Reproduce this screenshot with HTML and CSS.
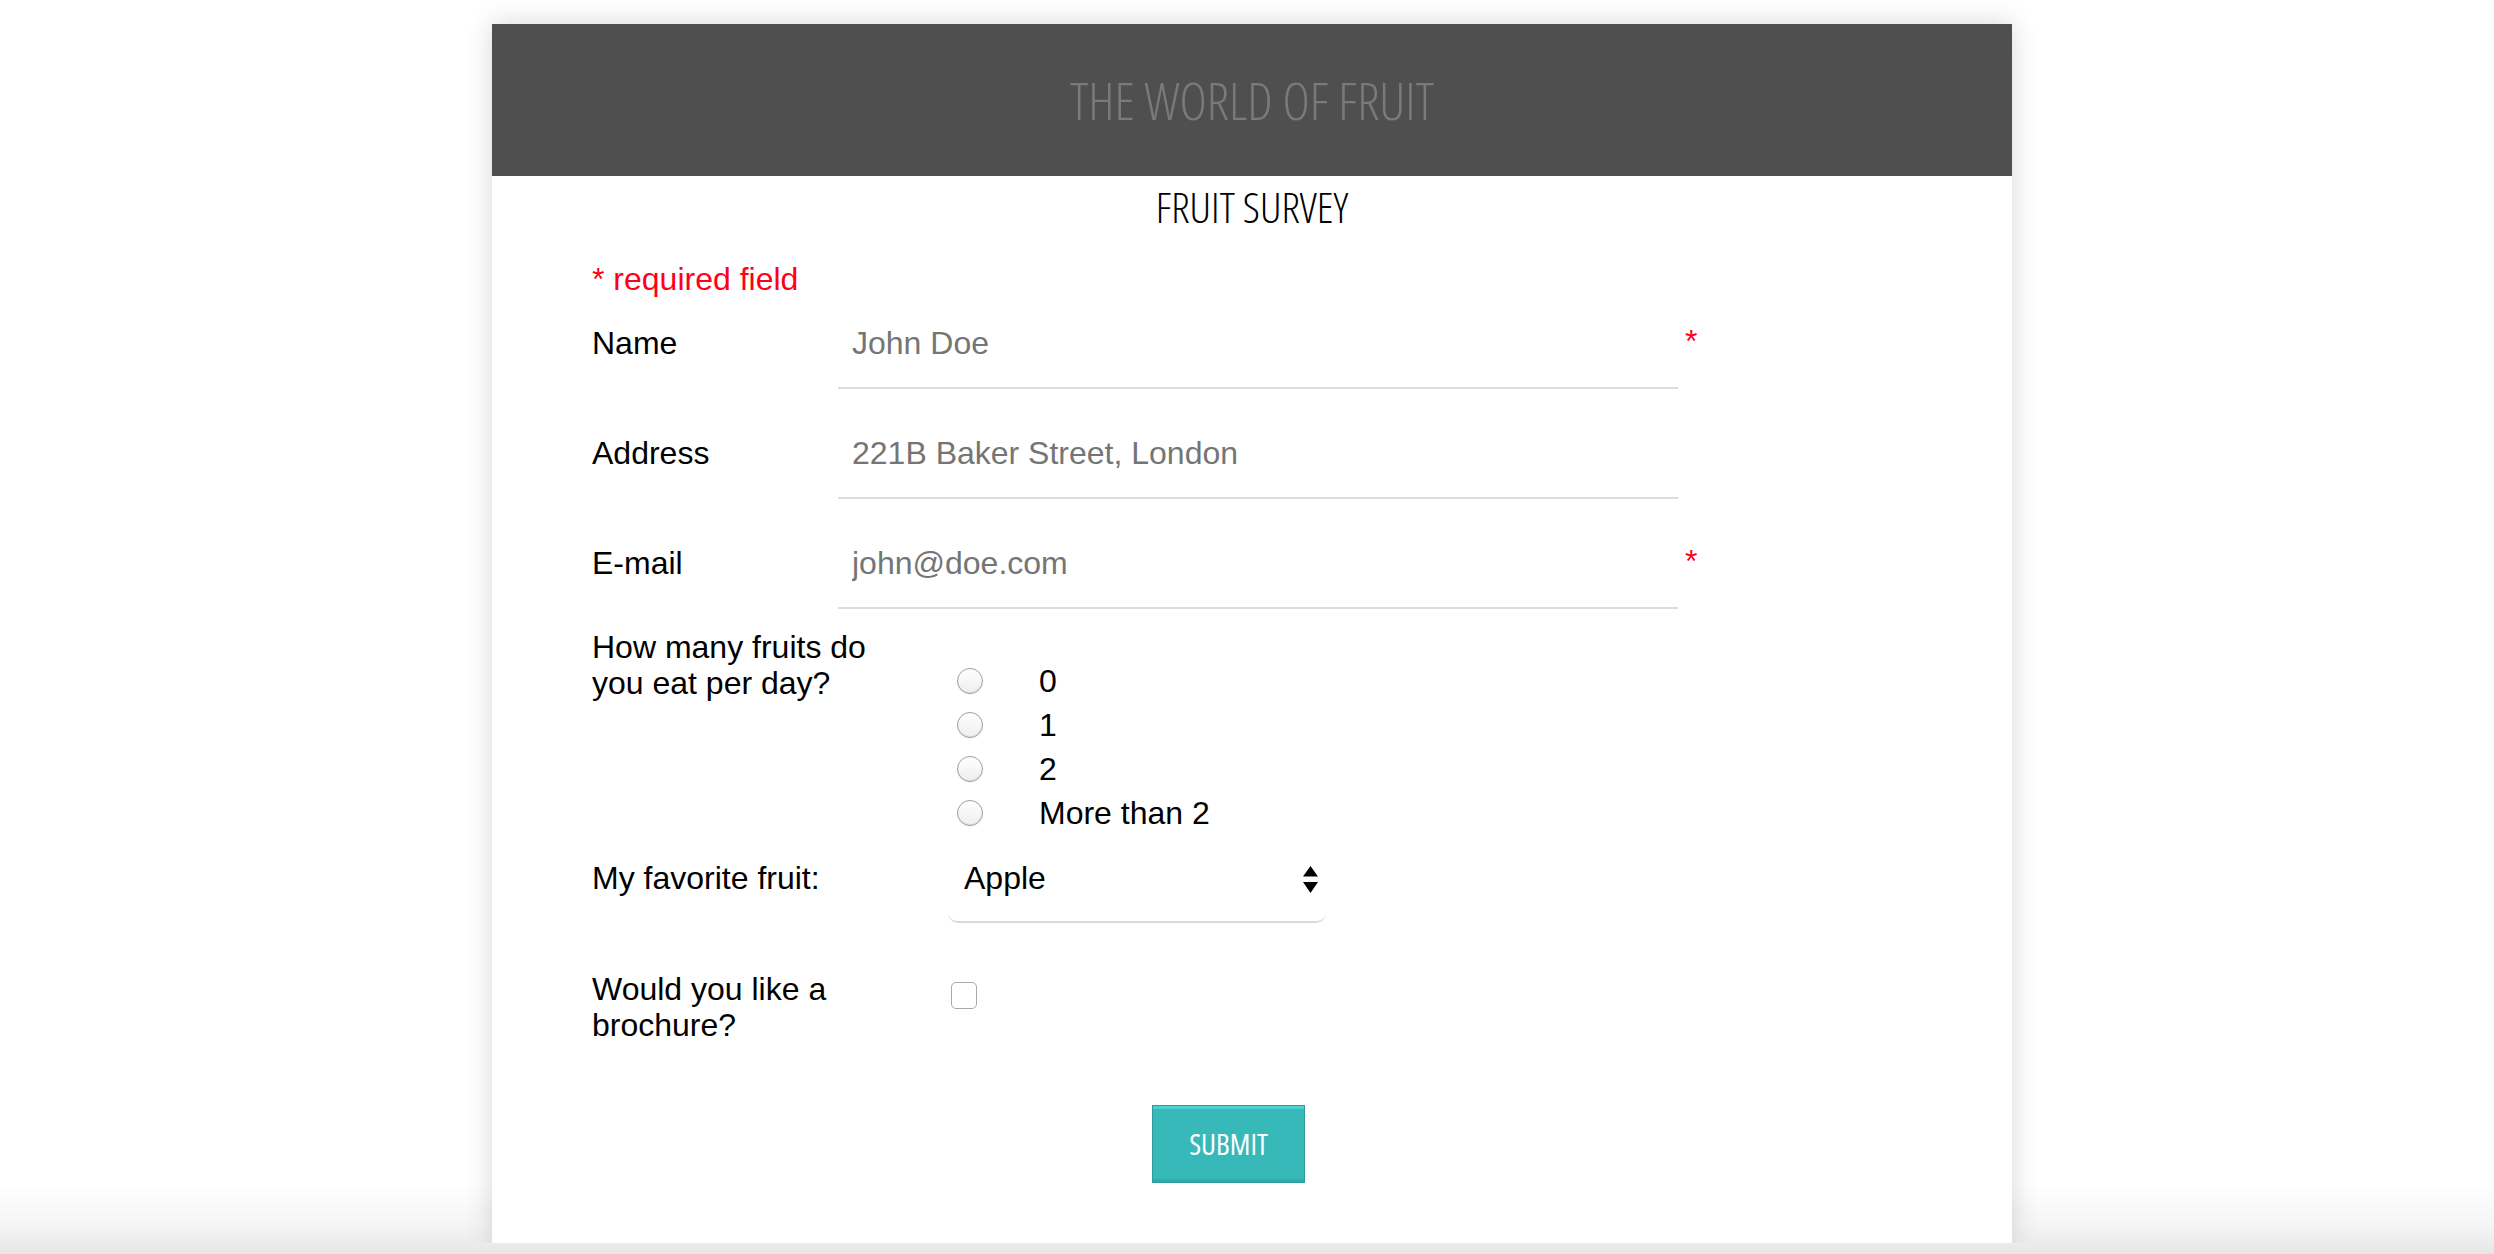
FILE: index.html
```html
<!DOCTYPE html>
<html lang="en">
<head>
<meta charset="utf-8">
<title>The World of Fruit</title>
<link rel="stylesheet" href="styles.css">
</head>
<body>
<div class="card">
  <header class="banner">
    <h1 class="banner-title">THE WORLD OF FRUIT</h1>
  </header>
  <h2 class="survey-title">FRUIT SURVEY</h2>
  <form class="form">
    <p class="required-note">* required field</p>

    <div class="text-row">
      <label class="text-label" for="name">Name</label>
      <input class="text-input" id="name" type="text" placeholder="John Doe">
      <span class="req">*</span>
    </div>
    <div class="text-row">
      <label class="text-label" for="address">Address</label>
      <input class="text-input" id="address" type="text" placeholder="221B Baker Street, London">
    </div>
    <div class="text-row">
      <label class="text-label" for="email">E-mail</label>
      <input class="text-input" id="email" type="email" placeholder="john@doe.com">
      <span class="req">*</span>
    </div>

    <div class="choice-row">
      <div class="choice-label">How many fruits do you eat per day?</div>
      <div class="radio-list">
        <label class="radio-item"><input class="radio" type="radio" name="fruits"><span class="radio-text">0</span></label>
        <label class="radio-item"><input class="radio" type="radio" name="fruits"><span class="radio-text">1</span></label>
        <label class="radio-item"><input class="radio" type="radio" name="fruits"><span class="radio-text">2</span></label>
        <label class="radio-item"><input class="radio" type="radio" name="fruits"><span class="radio-text">More than 2</span></label>
      </div>
    </div>

    <div class="select-row">
      <label class="choice-label" for="fav">My favorite fruit:</label>
      <div class="select-wrap">
        <select class="select" id="fav">
          <option>Apple</option>
          <option>Banana</option>
          <option>Cherry</option>
        </select>
        <svg class="select-arrows" width="15" height="27" viewBox="0 0 15 27"><path d="M7.5 0 L15 10.5 L0 10.5 Z M0 16 L15 16 L7.5 27 Z" fill="#000"/></svg>
      </div>
    </div>

    <div class="check-row">
      <label class="choice-label" for="brochure">Would you like a brochure?</label>
      <input class="check" id="brochure" type="checkbox">
    </div>

    <div class="submit-row">
      <button class="submit" type="submit">SUBMIT</button>
    </div>
  </form>
</div>
</body>
</html>
```

FILE: styles.css
```css
html {
  height: 100%;
  background: linear-gradient(to bottom, #ffffff 0, #ffffff 1185px, #f5f5f5 1225px, #e6e6e6 1254px);
}

body {
  margin: 0;
  padding: 24px 0 0 10px;
  font-family: "Liberation Sans", Arial, Helvetica, sans-serif;
  font-size: 32px;
  color: #000;
}

.card {
  width: 1520px;
  margin: 0 auto;
  background: #fff;
  box-shadow: 0 0 26px rgba(0, 0, 0, 0.16);
  padding-bottom: 60px;
}

.banner {
  height: 152px;
  background: #4f4f4f;
  display: flex;
  align-items: center;
  justify-content: center;
}

.banner-title {
  margin: 0;
  font-family: "Open Sans", "Liberation Sans Narrow", sans-serif;
  font-weight: 300;
  font-stretch: 75%;
  font-size: 52px;
  line-height: 1;
  color: #7a7a7a;
}

.survey-title {
  margin: 6px 0 0;
  text-align: center;
  font-family: "Open Sans", "Liberation Sans Narrow", sans-serif;
  font-weight: 300;
  font-stretch: 75%;
  font-size: 43px;
  line-height: 50px;
  color: #000;
}

.form {
  padding: 0 100px;
}

.required-note {
  margin: 29px 0 22px;
  color: #ff0018;
  line-height: 36px;
}

.text-row {
  display: flex;
  align-items: baseline;
  margin-bottom: 40px;
}

.text-label {
  width: 246px;
  flex: none;
}

.text-input {
  width: 840px;
  height: 70px;
  box-sizing: border-box;
  padding: 0 14px 20px;
  border: none;
  border-bottom: 2px solid #dcdcdc;
  font-family: "Liberation Sans", Arial, sans-serif;
  font-size: 32px;
  color: #757575;
  outline: none;
  background: transparent;
}

.text-input::placeholder {
  color: #757575;
  opacity: 1;
}

.req {
  align-self: flex-start;
  color: #ff0018;
  margin: 4px 0 0 7px;
  line-height: 36px;
}

.choice-row {
  display: flex;
  align-items: flex-start;
  margin-top: -20px;
}

.choice-label {
  width: 300px;
  flex: none;
  margin-right: 56px;
  line-height: 36px;
}

.radio-list {
  display: flex;
  flex-direction: column;
  margin-top: 30px;
  padding-left: 9px;
}

.radio-item {
  display: flex;
  align-items: center;
  height: 44px;
  line-height: 44px;
}

.radio {
  appearance: none;
  -webkit-appearance: none;
  width: 26px;
  height: 26px;
  margin: 0 56px 0 0;
  border-radius: 50%;
  border: 1.5px solid #a0a0a0;
  background: linear-gradient(#ffffff, #eeeeee);
  box-shadow: inset 0 -1px 1px rgba(0, 0, 0, 0.08), 0 1px 1px rgba(0, 0, 0, 0.06);
  box-sizing: border-box;
}

.select-row {
  display: flex;
  align-items: baseline;
  margin-top: 24px;
}

.select-wrap {
  position: relative;
}

.select {
  appearance: none;
  -webkit-appearance: none;
  width: 378px;
  height: 64px;
  box-sizing: border-box;
  padding: 0 40px 24px 16px;
  border: none;
  border-bottom: 2px solid #dadada;
  border-radius: 0 0 10px 10px;
  background: #fff;
  font-family: "Liberation Sans", Arial, sans-serif;
  font-size: 32px;
  color: #000;
  outline: none;
}

.select-arrows {
  position: absolute;
  right: 8px;
  top: 7px;
  pointer-events: none;
}

.check-row {
  display: flex;
  align-items: flex-start;
  margin-top: 48px;
}

.check {
  appearance: none;
  -webkit-appearance: none;
  width: 26px;
  height: 27px;
  margin: 11px 0 0 3px;
  border: 1.5px solid #a8a8a8;
  border-radius: 5px;
  background: #fff;
  box-sizing: border-box;
}

.submit-row {
  display: flex;
  padding-left: 560px;
  margin-top: 62px;
}

.submit {
  width: 153px;
  height: 78px;
  box-sizing: border-box;
  background: #37b9b9;
  border: 1px solid #2a9c9c;
  box-shadow: inset 0 3px 0 #4ccfcf, inset 0 -3px 0 #2fa9a9;
  color: #fff;
  font-family: "Open Sans", "Liberation Sans Narrow", sans-serif;
  font-stretch: 75%;
  font-weight: 400;
  font-size: 29px;
  padding: 0 0 2px;
  cursor: pointer;
}
```
